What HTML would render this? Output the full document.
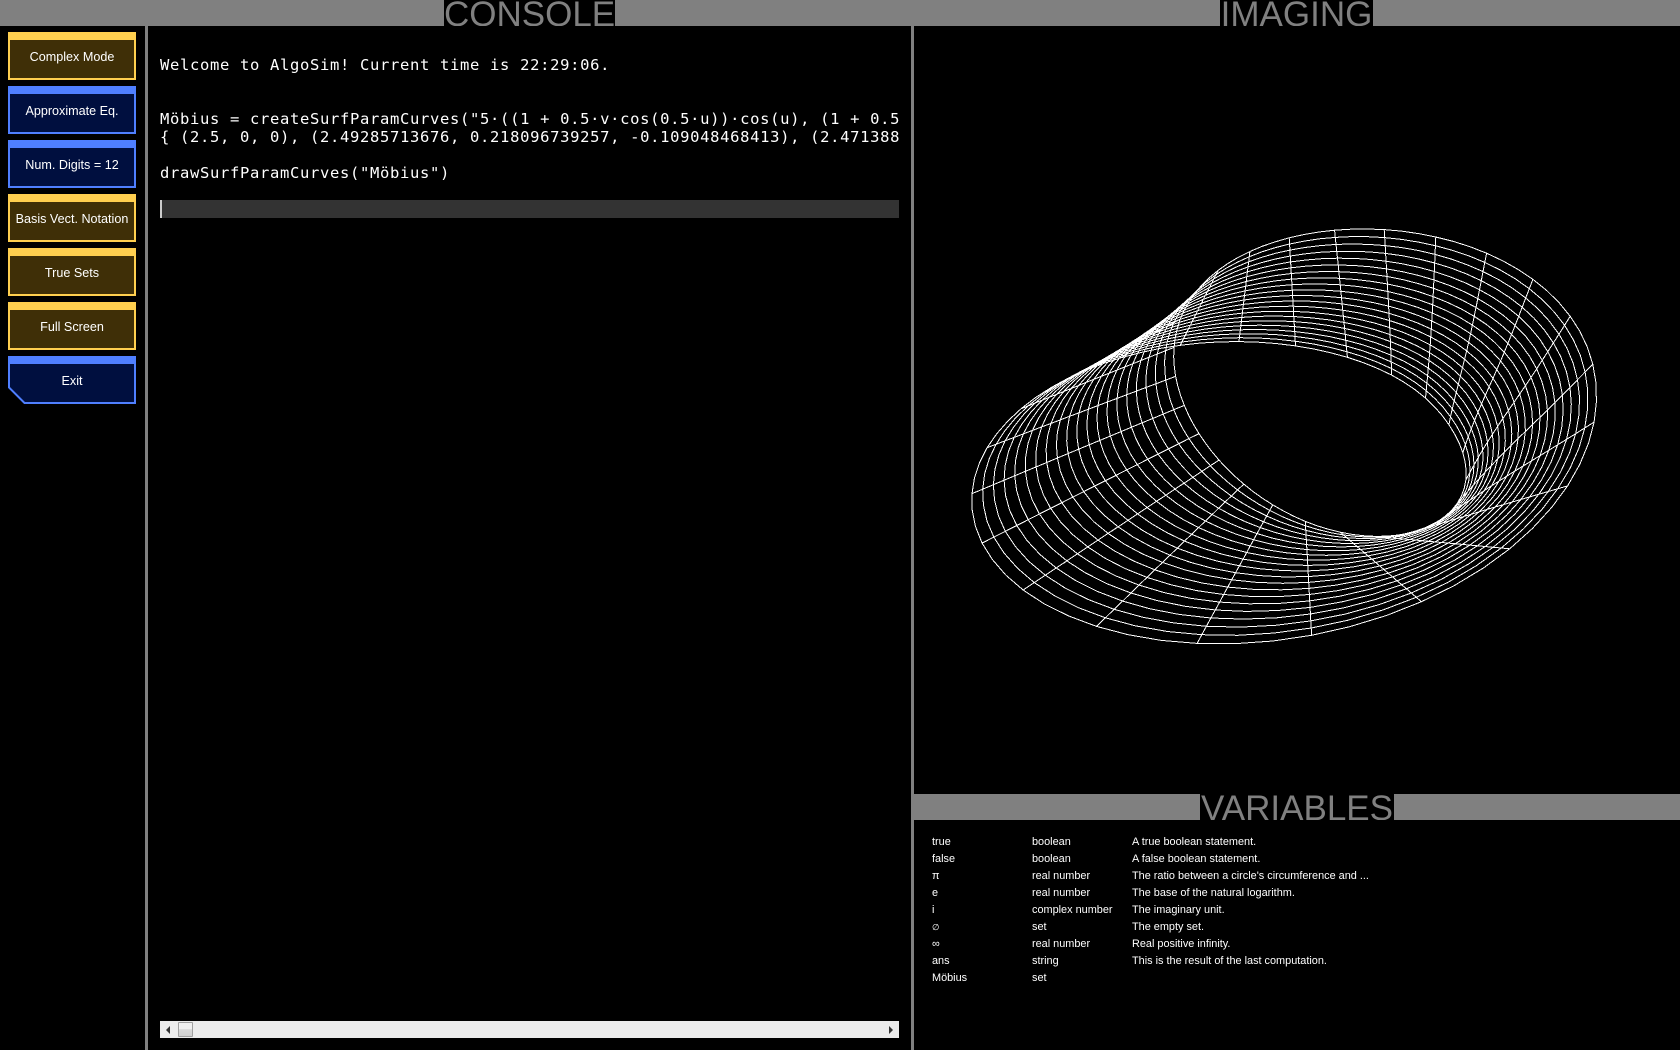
<!DOCTYPE html>
<html><head><meta charset="utf-8"><title>AlgoSim</title>
<style>
html,body{margin:0;padding:0;background:#000;width:1680px;height:1050px;overflow:hidden}
body{position:relative;font-family:"Liberation Sans",sans-serif;color:#fff}
.a{position:absolute}
.g{position:absolute;background:#808080}
.t{position:absolute;background:#000;color:#808080;font-size:35px;line-height:30px;height:26px;overflow:hidden;text-align:center;white-space:nowrap}
.b{position:absolute;left:8px;width:128px;height:48px;box-sizing:border-box;border:2px solid;border-top-width:8px;font-size:12.6px;line-height:34px;text-align:center;white-space:nowrap}
.y{border-color:#ffcf4f;background:#3f2f07}
.u{border-color:#4f7fff;background:#000f3f}
pre{margin:0;position:absolute;font-family:"DejaVu Sans Mono",monospace;font-size:15.5px;letter-spacing:.67px;line-height:18px;color:#fff;overflow:hidden;white-space:pre}
.v{position:absolute;top:834px;font-size:10.9px;line-height:17px;white-space:pre;color:#fff}
</style></head><body>
<div class="g" style="left:0;top:0;width:1680px;height:26px"></div>
<div class="g" style="left:145px;top:26px;width:3px;height:1024px"></div>
<div class="g" style="left:911px;top:26px;width:3px;height:1024px"></div>
<div class="g" style="left:914px;top:794px;width:766px;height:26px"></div>
<div class="t" style="left:444px;top:0;width:171px">CONSOLE</div>
<div class="t" style="left:1220px;top:0;width:153px">IMAGING</div>
<div class="t" style="left:1200px;top:794px;width:194px">VARIABLES</div>

<div class="b y" style="top:32px">Complex Mode</div>
<div class="b u" style="top:86px">Approximate Eq.</div>
<div class="b u" style="top:140px">Num. Digits = 12</div>
<div class="b y" style="top:194px">Basis Vect. Notation</div>
<div class="b y" style="top:248px">True Sets</div>
<div class="b y" style="top:302px">Full Screen</div>
<svg class="a" style="left:0;top:350px" width="145" height="60">
<polygon points="9,7 135,7 135,53 24.5,53 9,37.5" fill="#000f3f" stroke="#4f7fff" stroke-width="2"/>
<rect x="8" y="6" width="128" height="8" fill="#4f7fff"/>
</svg>
<div class="a" style="left:8px;top:357px;width:128px;height:48px;line-height:48px;text-align:center;font-size:12.6px">Exit</div>

<pre style="left:160px;top:56px;width:739px;height:144px">Welcome to AlgoSim! Current time is 22:29:06.


Möbius = createSurfParamCurves("5·((1 + 0.5·v·cos(0.5·u))·cos(u), (1 + 0.5·v·cos(0.5·u))·sin(u), 0.5·v·sin(0.5·u))")
{ (2.5, 0, 0), (2.49285713676, 0.218096739257, -0.109048468413), (2.471388, 0.43, -0.21) }

drawSurfParamCurves("Möbius")</pre>
<div class="a" style="left:160px;top:200px;width:739px;height:18px;background:#333"></div>
<div class="a" style="left:160px;top:200px;width:2px;height:18px;background:#ccc"></div>

<div class="a" style="left:160px;top:1021px;width:739px;height:17px;background:#ececec"></div>
<div class="a" style="left:166px;top:1026px;width:0;height:0;border:4px solid transparent;border-left:0;border-right:4px solid #333"></div>
<div class="a" style="left:178px;top:1022px;width:13px;height:13px;border:1px solid #a0a0a0;border-radius:1px;background:linear-gradient(#f0f0f0 0,#f0f0f0 45%,#d8d8d8 50%,#d0d0d0 100%)"></div>
<div class="a" style="left:889px;top:1026px;width:0;height:0;border:4px solid transparent;border-right:0;border-left:4px solid #333"></div>

<svg class="a" id="m" style="left:914px;top:26px" width="766" height="768" viewBox="914 26 766 768"><path id="wire" fill="none" stroke="#fff" stroke-width="1" shape-rendering="crispEdges" d=""/></svg>

<div class="v" style="left:932px">true
false
π
e
i
<span style="font-size:8.5px">∅</span>
∞
ans
Möbius</div>
<div class="v" style="left:1032px">boolean
boolean
real number
real number
complex number
set
real number
string
set</div>
<div class="v" style="left:1132px">A true boolean statement.
A false boolean statement.
The ratio between a circle's circumference and ...
The base of the natural logarithm.
The imaginary unit.
The empty set.
Real positive infinity.
This is the result of the last computation.</div>

<script>
(function(){
var D=23,F=1012,T=37.5*Math.PI/180,st=Math.sin(T),ct=Math.cos(T),cx=1299,cy=407.5,rx=0.056,ry=0.024;
function P(u,v){
  var r=5*(1+.5*v*Math.cos(u/2)),h=2.5*v*Math.sin(u/2),th=u-Math.PI/4;
  var p=r*Math.sin(th),q=-r*Math.cos(th);
  var y=q*st+h*ct,d=D+q*ct-h*st;
  var sx=F*p/d,sy=-F*y/d;
  var wy=sy*(1+(sy<0?.00018:.00006)*sy);
  var wx=sx>0?sx*(1-.00004*sx):sx;
  var a=(sx-170)/70,b=(sy-30)/70;
  wx-=6*Math.exp(-a*a-b*b);
  var X=cx+wx+rx*sy,Y=cy+wy-ry*sx;
  return X.toFixed(1)+" "+Y.toFixed(1);
}
var s="",i,j,R=Math.PI/180;
for(i=-10;i<=10;i++){
  for(j=0;j<=72;j++){s+=(j?"L":"M")+P(j*5*R,i/10);}
}
for(j=0;j<24;j++){
  for(i=-10;i<=10;i++){s+=(i>-10?"L":"M")+P(j*15*R,i/10);}
}
document.getElementById("wire").setAttribute("d",s);
})();
</script>
</body></html>
